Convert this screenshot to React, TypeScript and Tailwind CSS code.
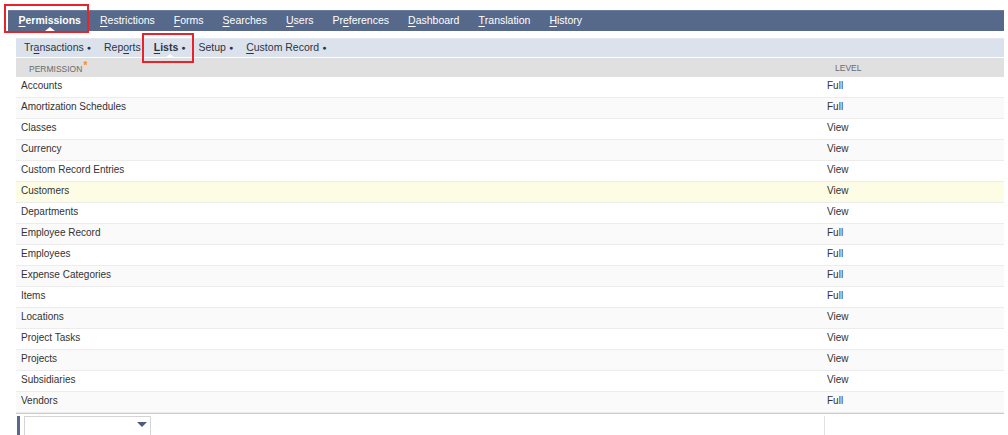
import React from 'react'

interface Row {
  name: string
  level: 'Full' | 'View'
}

const rows: Row[] = [
  { name: 'Accounts', level: 'Full' },
  { name: 'Amortization Schedules', level: 'Full' },
  { name: 'Classes', level: 'View' },
  { name: 'Currency', level: 'View' },
  { name: 'Custom Record Entries', level: 'View' },
  { name: 'Customers', level: 'View' },
  { name: 'Departments', level: 'View' },
  { name: 'Employee Record', level: 'Full' },
  { name: 'Employees', level: 'Full' },
  { name: 'Expense Categories', level: 'Full' },
  { name: 'Items', level: 'Full' },
  { name: 'Locations', level: 'View' },
  { name: 'Project Tasks', level: 'View' },
  { name: 'Projects', level: 'View' },
  { name: 'Subsidiaries', level: 'View' },
  { name: 'Vendors', level: 'Full' }
]

// label split into [before, accessKey, after]
const mainTabs: [string, string, string][] = [
  ['', 'P', 'ermissions'],
  ['', 'R', 'estrictions'],
  ['', 'F', 'orms'],
  ['', 'S', 'earches'],
  ['', 'U', 'sers'],
  ['Pr', 'e', 'ferences'],
  ['', 'D', 'ashboard'],
  ['', 'T', 'ranslation'],
  ['', 'H', 'istory']
]

const subTabs: { label: [string, string, string]; dot: boolean }[] = [
  { label: ['Tr', 'a', 'nsactions'], dot: true },
  { label: ['Rep', 'o', 'rts'], dot: false },
  { label: ['', 'L', 'ists'], dot: true },
  { label: ['Setup', '', ''], dot: true },
  { label: ['', 'C', 'ustom Record'], dot: true }
]

function Label({ parts }: { parts: [string, string, string] }) {
  return (
    <>
      {parts[0]}
      {parts[1] && <span className="underline underline-offset-2">{parts[1]}</span>}
      {parts[2]}
    </>
  )
}

export default function App() {
  return (
    <div
      className="relative w-[1008px] h-[435px] overflow-hidden bg-white text-[#333]"
      style={{ fontFamily: '"Liberation Sans", Arial, sans-serif' }}
    >
      <div className="pt-[10px] pl-[8px] pr-[4px]">
        {/* main tabs */}
        <div className="h-[21px] bg-[#56698a] border-t border-[#6b7d9b] flex items-center pl-[1px]">
          {mainTabs.map((t, i) => (
            <div
              key={i}
              className={`relative h-full flex items-center px-[9.5px] text-[10.5px] text-white ${i === 0 ? 'font-bold' : ''}`}
            >
              <Label parts={t} />
              {i === 0 && (
                <span className="absolute bottom-0 left-1/2 -translate-x-1/2 w-0 h-0 border-l-[5px] border-r-[5px] border-b-[4px] border-l-transparent border-r-transparent border-b-white" />
              )}
            </div>
          ))}
        </div>

        <div className="ml-[8px] mt-[7px]">
          {/* sub tabs */}
          <div className="h-[19px] bg-[#dbe2ec] flex items-center pl-[8px] gap-[13px] border-t border-[#e3e8f0]">
            {subTabs.map((t, i) => (
              <div
                key={i}
                className={`relative h-full flex items-center text-[10.5px] text-[#2c3444] ${i === 2 ? 'font-bold' : ''}`}
              >
                <Label parts={t.label} />
                {t.dot && <span className="ml-[3px] text-[7px] font-normal">&#9679;</span>}
                {i === 2 && (
                  <span className="absolute -bottom-[1px] left-[11px] w-0 h-0 border-l-[5px] border-r-[5px] border-b-[4px] border-l-transparent border-r-transparent border-b-white" />
                )}
              </div>
            ))}
          </div>

          {/* header */}
          <div className="h-[20px] bg-[#e0e0e0] border-t border-white flex items-center text-[8.5px] text-[#6a6a6a]">
            <div className="w-[807px] pl-[13px] pt-[2px]">
              PERMISSION<span className="text-[#f0901c] text-[10px] font-bold relative -top-[3px] ml-[1px]">*</span>
            </div>
            <div className="pl-[12px] pt-[2px]">LEVEL</div>
          </div>

          {/* rows */}
          <div className="border-b border-[#c8ccd3]">
            {rows.map((r, i) => (
              <div
                key={r.name}
                className={`h-[21px] flex items-center text-[10px] border-b border-[#ececec] ${
                  r.name === 'Customers' ? 'bg-[#fdfde6]' : i % 2 === 1 ? 'bg-[#fafafa]' : 'bg-white'
                }`}
              >
                <div className="w-[807px] pl-[5px] -mt-[3px]">{r.name}</div>
                <div className="pl-[4px] -mt-[3px]">{r.level}</div>
              </div>
            ))}
          </div>

          {/* new row */}
          <div className="h-[22px] flex pt-[2px]">
            <div className="w-[3px] bg-[#56698a] ml-[1px]" />
            <div className="ml-[4px] w-[127px] h-[21px] border border-[#d4d4d4] relative">
              <span className="absolute right-[3px] top-[5px] w-0 h-0 border-l-[5px] border-r-[5px] border-t-[5px] border-l-transparent border-r-transparent border-t-[#4a5d7e]" />
            </div>
            <div className="ml-[673px] w-px bg-[#e2e2e2]" />
          </div>
        </div>
      </div>

      {/* red highlight boxes */}
      <div className="absolute left-[4px] top-[4px] w-[85px] h-[29px] border-2 border-[#e8232a]" />
      <div className="absolute left-[142px] top-[33px] w-[52px] h-[30px] border-2 border-[#e8232a]" />
    </div>
  )
}
